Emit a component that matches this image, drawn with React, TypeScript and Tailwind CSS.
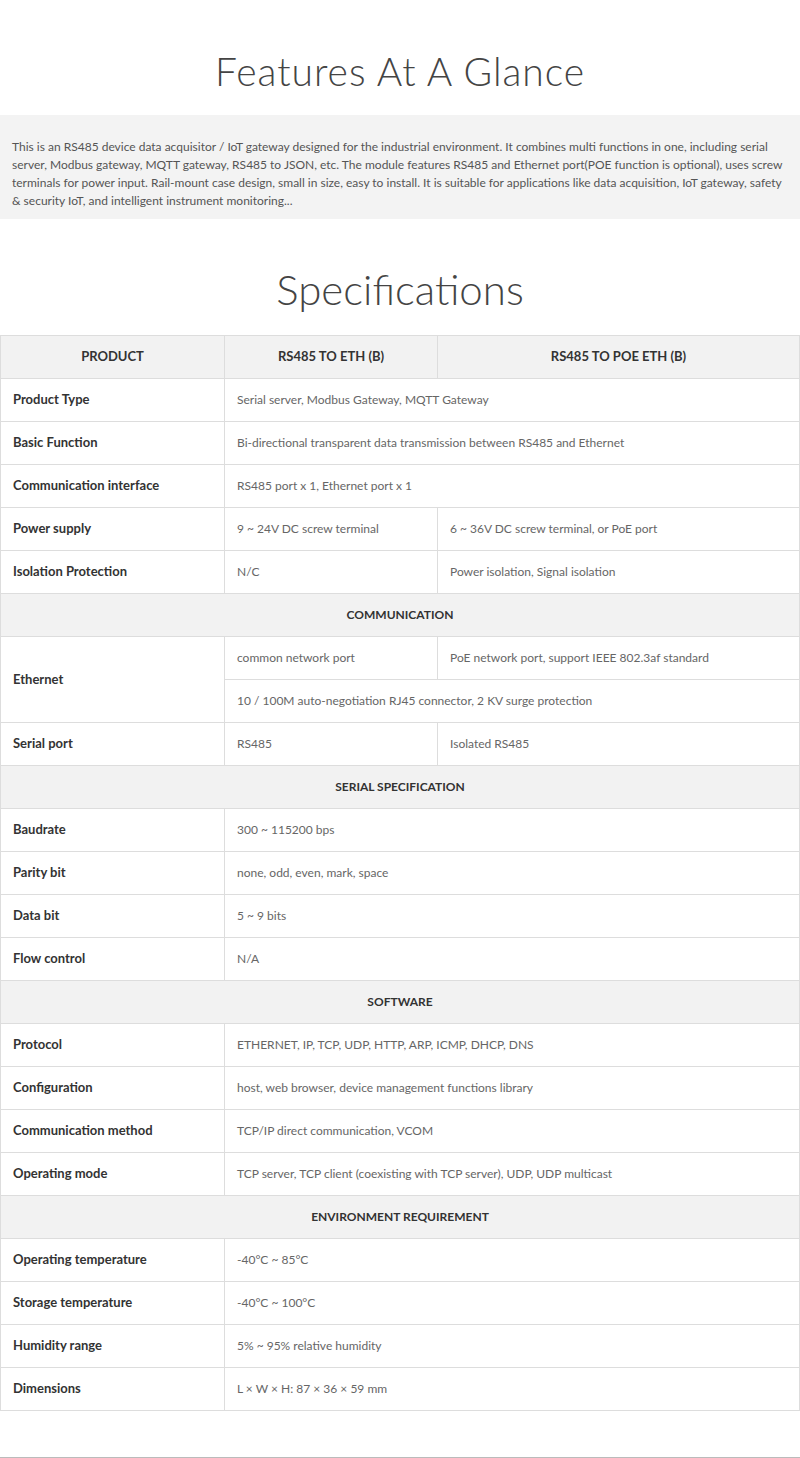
const rows: (
  | { kind: 'section'; title: string }
  | { kind: 'row'; label: string; a: string; b?: string }
  | { kind: 'ethernet' }
)[] = [
  { kind: 'row', label: 'Product Type', a: 'Serial server, Modbus Gateway, MQTT Gateway' },
  { kind: 'row', label: 'Basic Function', a: 'Bi-directional transparent data transmission between RS485 and Ethernet' },
  { kind: 'row', label: 'Communication interface', a: 'RS485 port x 1, Ethernet port x 1' },
  { kind: 'row', label: 'Power supply', a: '9 ~ 24V DC screw terminal', b: '6 ~ 36V DC screw terminal, or PoE port' },
  { kind: 'row', label: 'Isolation Protection', a: 'N/C', b: 'Power isolation, Signal isolation' },
  { kind: 'section', title: 'COMMUNICATION' },
  { kind: 'ethernet' },
  { kind: 'row', label: 'Serial port', a: 'RS485', b: 'Isolated RS485' },
  { kind: 'section', title: 'SERIAL SPECIFICATION' },
  { kind: 'row', label: 'Baudrate', a: '300 ~ 115200 bps' },
  { kind: 'row', label: 'Parity bit', a: 'none, odd, even, mark, space' },
  { kind: 'row', label: 'Data bit', a: '5 ~ 9 bits' },
  { kind: 'row', label: 'Flow control', a: 'N/A' },
  { kind: 'section', title: 'SOFTWARE' },
  { kind: 'row', label: 'Protocol', a: 'ETHERNET, IP, TCP, UDP, HTTP, ARP, ICMP, DHCP, DNS' },
  { kind: 'row', label: 'Configuration', a: 'host, web browser, device management functions library' },
  { kind: 'row', label: 'Communication method', a: 'TCP/IP direct communication, VCOM' },
  { kind: 'row', label: 'Operating mode', a: 'TCP server, TCP client (coexisting with TCP server), UDP, UDP multicast' },
  { kind: 'section', title: 'ENVIRONMENT REQUIREMENT' },
  { kind: 'row', label: 'Operating temperature', a: '-40°C ~ 85°C' },
  { kind: 'row', label: 'Storage temperature', a: '-40°C ~ 100°C' },
  { kind: 'row', label: 'Humidity range', a: '5% ~ 95% relative humidity' },
  { kind: 'row', label: 'Dimensions', a: 'L × W × H: 87 × 36 × 59 mm' },
];

const labelCls = 'h-[43px] border border-[#dddddd] px-3 text-left text-[13px] font-bold text-[#333333]';
const valueCls = 'h-[43px] border border-[#dddddd] px-3 text-left text-[12px] text-[#666666]';
const headCls = 'h-[43px] border border-[#dddddd] text-center text-[13px] font-bold text-[#333333]';

export default function App() {
  return (
    <div className="flex h-[1458px] flex-col bg-white font-['Lato',sans-serif]">
      <div className="flex h-[115px] items-center justify-center pt-[26px]">
        <h1 className="text-[39px] font-light leading-[48px] tracking-wide text-[#444444]">Features At A Glance</h1>
      </div>
      <div className="bg-[#f3f3f3] px-3 pt-[23px] pb-[9px]">
        <p className="text-[12px] leading-[18px] text-[#555555]">
          This is an RS485 device data acquisitor / IoT gateway designed for the industrial environment. It combines multi
          functions in one, including serial server, Modbus gateway, MQTT gateway, RS485 to JSON, etc. The module features
          RS485 and Ethernet port(POE function is optional), uses screw terminals for power input. Rail-mount case design,
          small in size, easy to install. It is suitable for applications like data acquisition, IoT gateway, safety &amp;
          security IoT, and intelligent instrument monitoring...
        </p>
      </div>
      <div className="flex h-[116px] items-center justify-center pt-[24px]">
        <h2 className="text-[42px] font-light text-[#444444]">Specifications</h2>
      </div>
      <table className="w-full table-fixed border-collapse">
        <colgroup>
          <col className="w-[224px]" />
          <col className="w-[213px]" />
          <col />
        </colgroup>
        <thead>
          <tr className="bg-[#f2f2f2]">
            <th className={headCls}>PRODUCT</th>
            <th className={headCls}>RS485 TO ETH (B)</th>
            <th className={headCls}>RS485 TO POE ETH (B)</th>
          </tr>
        </thead>
        <tbody>
          {rows.map((r, i) => {
            if (r.kind === 'section') {
              return (
                <tr key={i} className="bg-[#f2f2f2]">
                  <td colSpan={3} className="h-[43px] border border-[#dddddd] text-center text-[12px] font-bold text-[#333333]">
                    {r.title}
                  </td>
                </tr>
              );
            }
            if (r.kind === 'ethernet') {
              return [
                <tr key={i + 'a'}>
                  <td rowSpan={2} className={labelCls}>Ethernet</td>
                  <td className={valueCls}>common network port</td>
                  <td className={valueCls}>PoE network port, support IEEE 802.3af standard</td>
                </tr>,
                <tr key={i + 'b'}>
                  <td colSpan={2} className={valueCls}>10 / 100M auto-negotiation RJ45 connector, 2 KV surge protection</td>
                </tr>,
              ];
            }
            return (
              <tr key={i}>
                <td className={labelCls}>{r.label}</td>
                {r.b ? (
                  <>
                    <td className={valueCls}>{r.a}</td>
                    <td className={valueCls}>{r.b}</td>
                  </>
                ) : (
                  <td colSpan={2} className={valueCls}>{r.a}</td>
                )}
              </tr>
            );
          })}
        </tbody>
      </table>
      <div className="flex-1" />
      <div className="h-px bg-[#bbbbbb]" />
    </div>
  );
}
